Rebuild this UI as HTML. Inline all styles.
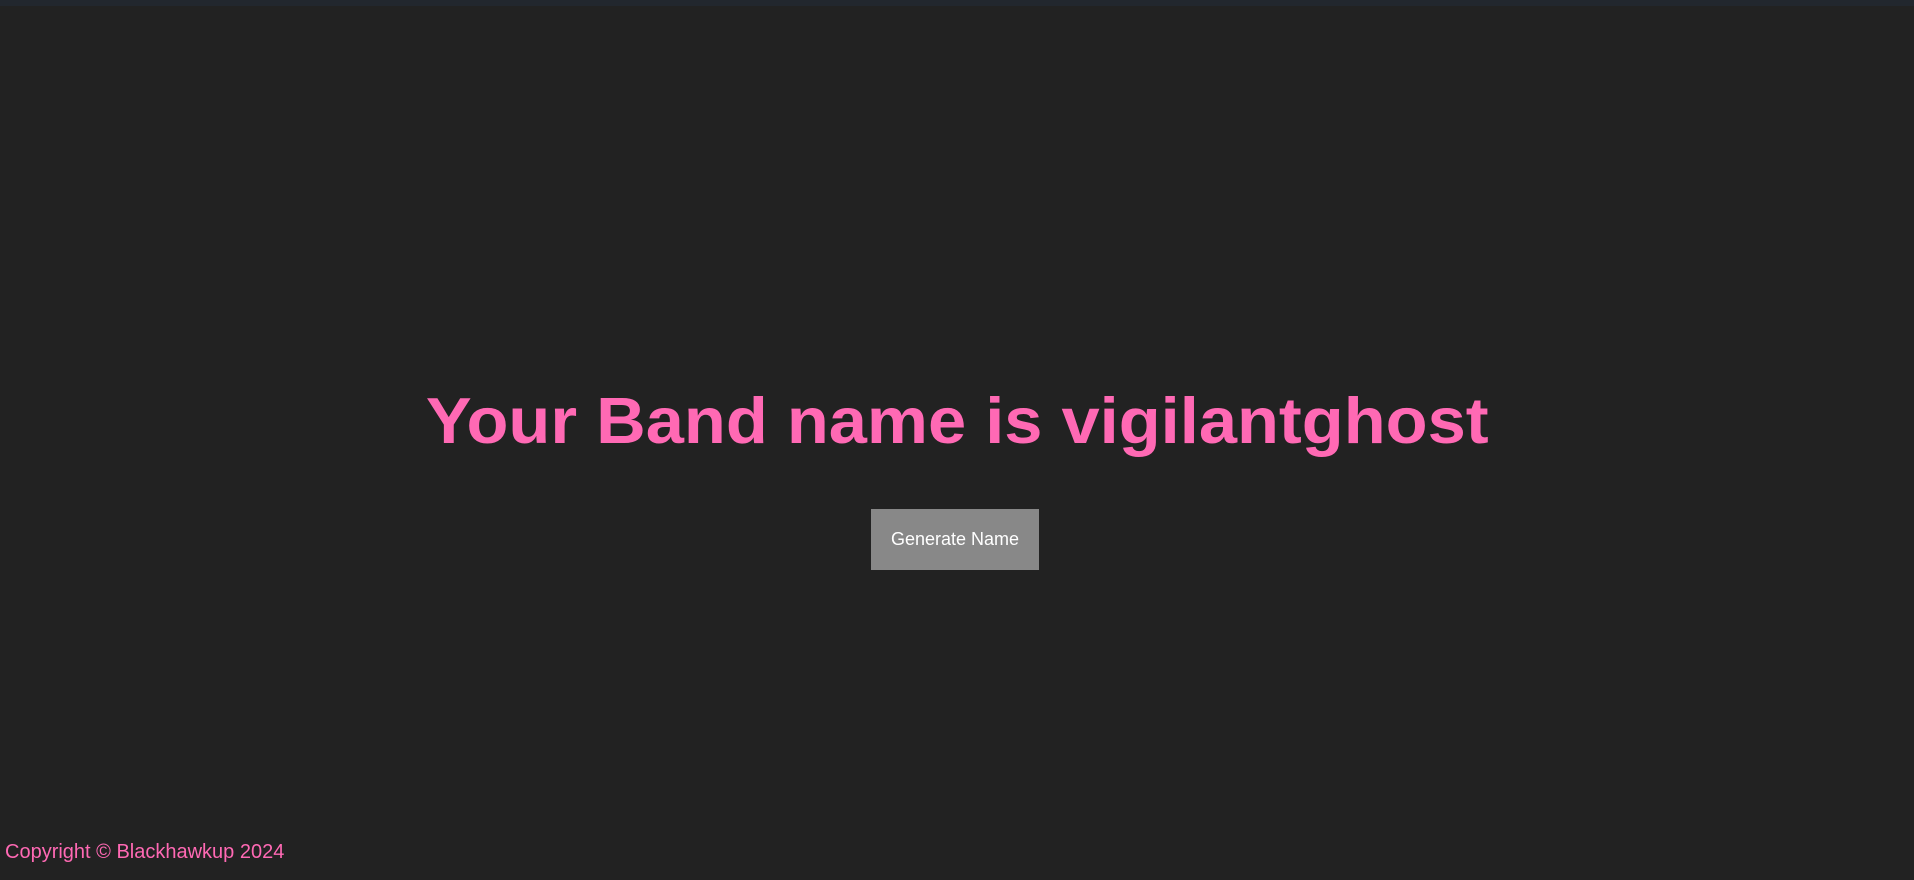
<!DOCTYPE html>
<html><head><meta charset="utf-8"><style>
html,body{margin:0;padding:0;}
body{width:1914px;height:880px;background:#222222;position:relative;overflow:hidden;font-family:"Liberation Sans",sans-serif;}
.bar{position:absolute;left:0;top:0;width:1914px;height:6px;background:#22272e;}
h1{position:absolute;left:0;width:1914px;top:376px;margin:0;text-align:center;color:#ff69b4;font-size:65px;line-height:90px;font-weight:bold;}
h1 span{display:inline-block;transform:scaleX(1.056);transform-origin:center;white-space:nowrap;}
.btn{position:absolute;left:871px;top:509px;width:168px;height:61px;background:#888888;color:#fff;font-size:18px;line-height:61px;text-align:center;}
.foot{position:absolute;left:5px;top:840px;color:#ff69b4;font-size:20px;line-height:24px;}
</style></head><body>
<div class="bar"></div>
<h1><span>Your Band name is vigilantghost</span></h1>
<div class="btn">Generate Name</div>
<div class="foot">Copyright © Blackhawkup 2024</div>
</body></html>
